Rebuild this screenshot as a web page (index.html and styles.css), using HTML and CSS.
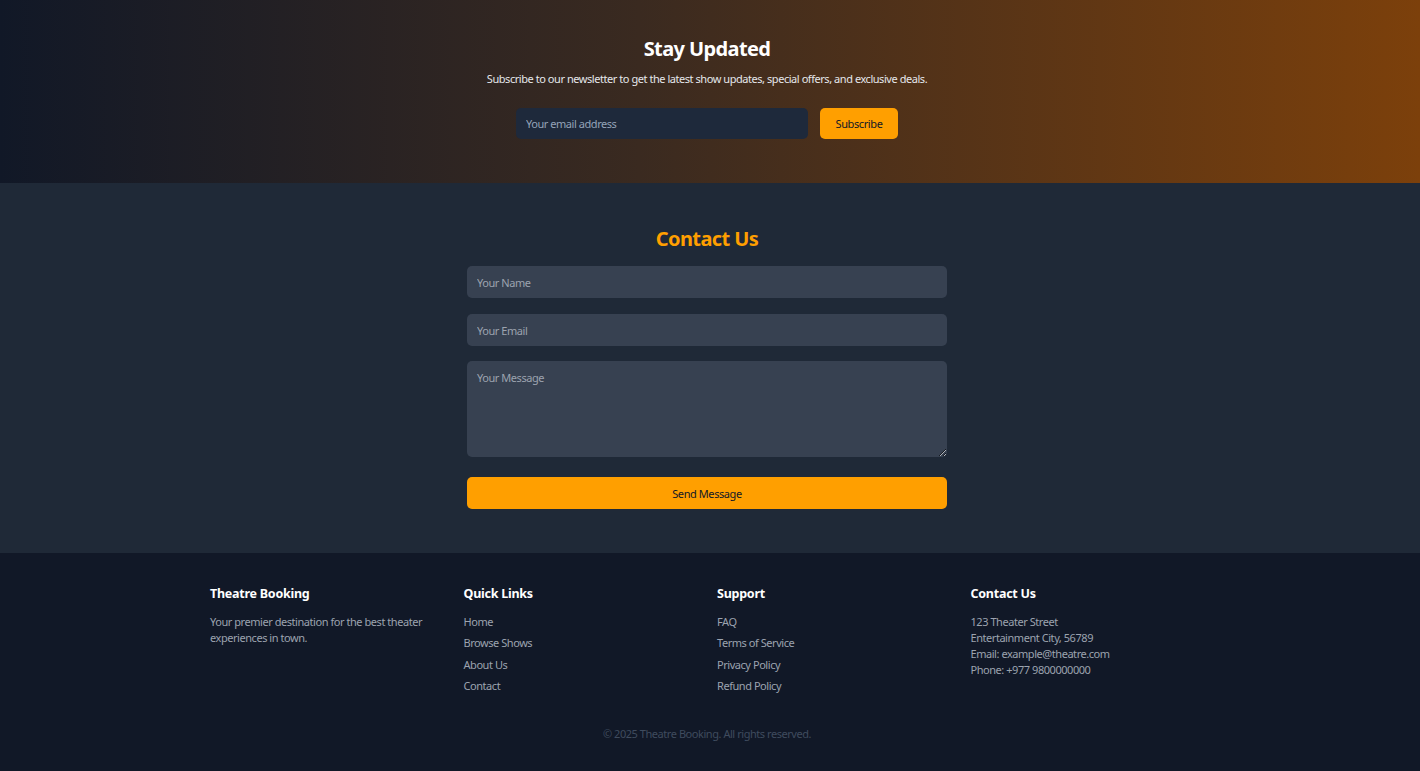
FILE: index.html
```html
<!DOCTYPE html>
<html lang="en">
<head>
<meta charset="utf-8">
<title>Theatre Booking</title>
<link rel="stylesheet" href="styles.css">
</head>
<body>
<section class="newsletter">
  <h2 class="newsletter-title">Stay Updated</h2>
  <p class="newsletter-text">Subscribe to our newsletter to get the latest show updates, special offers, and exclusive deals.</p>
  <form class="newsletter-form">
    <input class="newsletter-input" type="email" placeholder="Your email address">
    <button class="newsletter-btn" type="button">Subscribe</button>
  </form>
</section>

<section class="contact">
  <h2 class="contact-title">Contact Us</h2>
  <form class="contact-form">
    <input class="field" type="text" placeholder="Your Name">
    <input class="field" type="email" placeholder="Your Email">
    <textarea class="field field-area" placeholder="Your Message"></textarea>
    <button class="send-btn" type="button">Send Message</button>
  </form>
</section>

<footer class="footer">
  <div class="footer-grid">
    <div class="footer-col">
      <h3 class="footer-head">Theatre Booking</h3>
      <p class="footer-desc">Your premier destination for the best theater experiences in town.</p>
    </div>
    <div class="footer-col">
      <h3 class="footer-head">Quick Links</h3>
      <ul class="footer-links">
        <li><a href="#">Home</a></li>
        <li><a href="#">Browse Shows</a></li>
        <li><a href="#">About Us</a></li>
        <li><a href="#">Contact</a></li>
      </ul>
    </div>
    <div class="footer-col">
      <h3 class="footer-head">Support</h3>
      <ul class="footer-links">
        <li><a href="#">FAQ</a></li>
        <li><a href="#">Terms of Service</a></li>
        <li><a href="#">Privacy Policy</a></li>
        <li><a href="#">Refund Policy</a></li>
      </ul>
    </div>
    <div class="footer-col">
      <h3 class="footer-head">Contact Us</h3>
      <address class="footer-address">
        <span>123 Theater Street</span>
        <span>Entertainment City, 56789</span>
        <span>Email: example@theatre.com</span>
        <span>Phone: +977 9800000000</span>
      </address>
    </div>
  </div>
  <p class="copyright">© 2025 Theatre Booking. All rights reserved.</p>
</footer>
</body>
</html>
```

FILE: styles.css
```css
* { box-sizing: border-box; }
html, body { margin: 0; padding: 0; }
body {
  font-family: "Noto Sans", "Open Sans", sans-serif;
  background: #111827;
  color: #fff;
  letter-spacing: -0.45px;
}

.newsletter {
  height: 183px;
  padding: 35px 6px 0 0;
  background: linear-gradient(to right, #111827 0%, #3a2a20 45%, #7c400b 100%);
  text-align: center;
}
.newsletter-title {
  margin: 0;
  font-size: 20px;
  line-height: 28px;
  font-weight: 700;
  letter-spacing: -0.6px;
}
.newsletter-text {
  margin: 8px 0 0;
  font-size: 11px;
  line-height: 16px;
  color: #e5e7eb;
}
.newsletter-form {
  display: flex;
  justify-content: center;
  gap: 12px;
  margin-top: 21px;
}
.newsletter-input {
  width: 292px;
  height: 31px;
  border: none;
  border-radius: 5px;
  background: #1e293b;
  padding: 0 10px;
  font: inherit;
  font-size: 11px;
  letter-spacing: -0.45px;
  color: #fff;
}
.newsletter-input::placeholder { color: #94a3b8; }
.newsletter-btn {
  width: 78px;
  height: 31px;
  border: none;
  border-radius: 5px;
  background: #ff9f00;
  color: #111827;
  font: inherit;
  font-size: 11px;
  letter-spacing: -0.4px;
}

.contact {
  height: 370px;
  background: #1f2937;
  padding: 44px 6px 0 0;
}
.contact-title {
  margin: 0;
  text-align: center;
  font-size: 20px;
  line-height: 24px;
  font-weight: 700;
  color: #ff9f00;
  letter-spacing: -0.6px;
}
.contact-form {
  width: 480px;
  margin: 15px auto 0;
  display: flex;
  flex-direction: column;
  gap: 16px;
}
.field {
  height: 32px;
  border: none;
  border-radius: 5px;
  background: #374151;
  padding: 0 10px;
  font: inherit;
  font-size: 11px;
  letter-spacing: -0.45px;
  color: #fff;
}
.field::placeholder { color: #9ca3af; }
.field-area {
  height: 96px;
  margin-top: -1px;
  padding-top: 9px;
  resize: vertical;
}
.send-btn {
  height: 32px;
  margin-top: 4px;
  border: none;
  border-radius: 5px;
  background: #ff9f00;
  color: #111827;
  font: inherit;
  font-size: 11px;
  letter-spacing: -0.42px;
}

.footer {
  padding-top: 33px;
  height: 218px;
}
.footer-grid {
  width: 1000px;
  margin: 0 auto;
  display: grid;
  grid-template-columns: repeat(4, 1fr);
  column-gap: 14px;
}
.footer-head {
  margin: 0;
  font-size: 12.5px;
  line-height: 16px;
  font-weight: 700;
  color: #fff;
  letter-spacing: -0.25px;
}
.footer-desc {
  margin: 12px 0 0;
  font-size: 11px;
  line-height: 16px;
  color: #9ca3af;
  max-width: 225px;
}
.footer-links {
  list-style: none;
  margin: 12px 0 0;
  padding: 0;
  display: flex;
  flex-direction: column;
  gap: 5.33px;
}
.footer-links a {
  display: block;
  font-size: 11px;
  line-height: 16px;
  color: #9ca3af;
  text-decoration: none;
}
.footer-address {
  margin-top: 12px;
  font-style: normal;
  display: flex;
  flex-direction: column;
  font-size: 11px;
  line-height: 16px;
  color: #9ca3af;
}
.copyright {
  margin: 32px 0 0;
  padding-right: 6px;
  text-align: center;
  font-size: 11px;
  line-height: 16px;
  color: #3f4b5e;
}
```
